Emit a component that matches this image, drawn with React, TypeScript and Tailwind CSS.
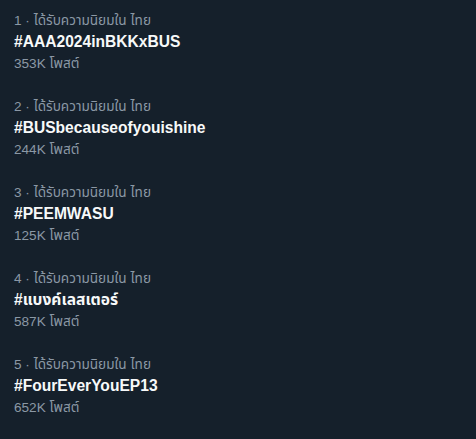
const trends = [
  { rank: 1, tag: '#AAA2024inBKKxBUS', posts: '353K' },
  { rank: 2, tag: '#BUSbecauseofyouishine', posts: '244K' },
  { rank: 3, tag: '#PEEMWASU', posts: '125K' },
  { rank: 4, tag: '#แบงค์เลสเตอร์', posts: '587K' },
  { rank: 5, tag: '#FourEverYouEP13', posts: '652K' },
];

export default function App() {
  return (
    <main className="w-[476px] h-[439px] bg-[#15202b] overflow-hidden font-['Liberation_Sans','Noto_Sans_Thai','Noto_Sans',sans-serif]">
      {trends.map((t) => (
        <div key={t.rank} className="h-[86px] px-[14px] pt-[13px] flex flex-col">
          <div className="text-[13.6px] leading-4 text-[#8b98a5]">
            {t.rank} · ได้รับความนิยมใน ไทย
          </div>
          <div className="mt-[3px] text-[15.6px] leading-5 font-bold text-[#f7f9f9]">{t.tag}</div>
          <div className="mt-[4px] text-[13.6px] leading-4 text-[#8b98a5]">{t.posts} โพสต์</div>
        </div>
      ))}
    </main>
  );
}
